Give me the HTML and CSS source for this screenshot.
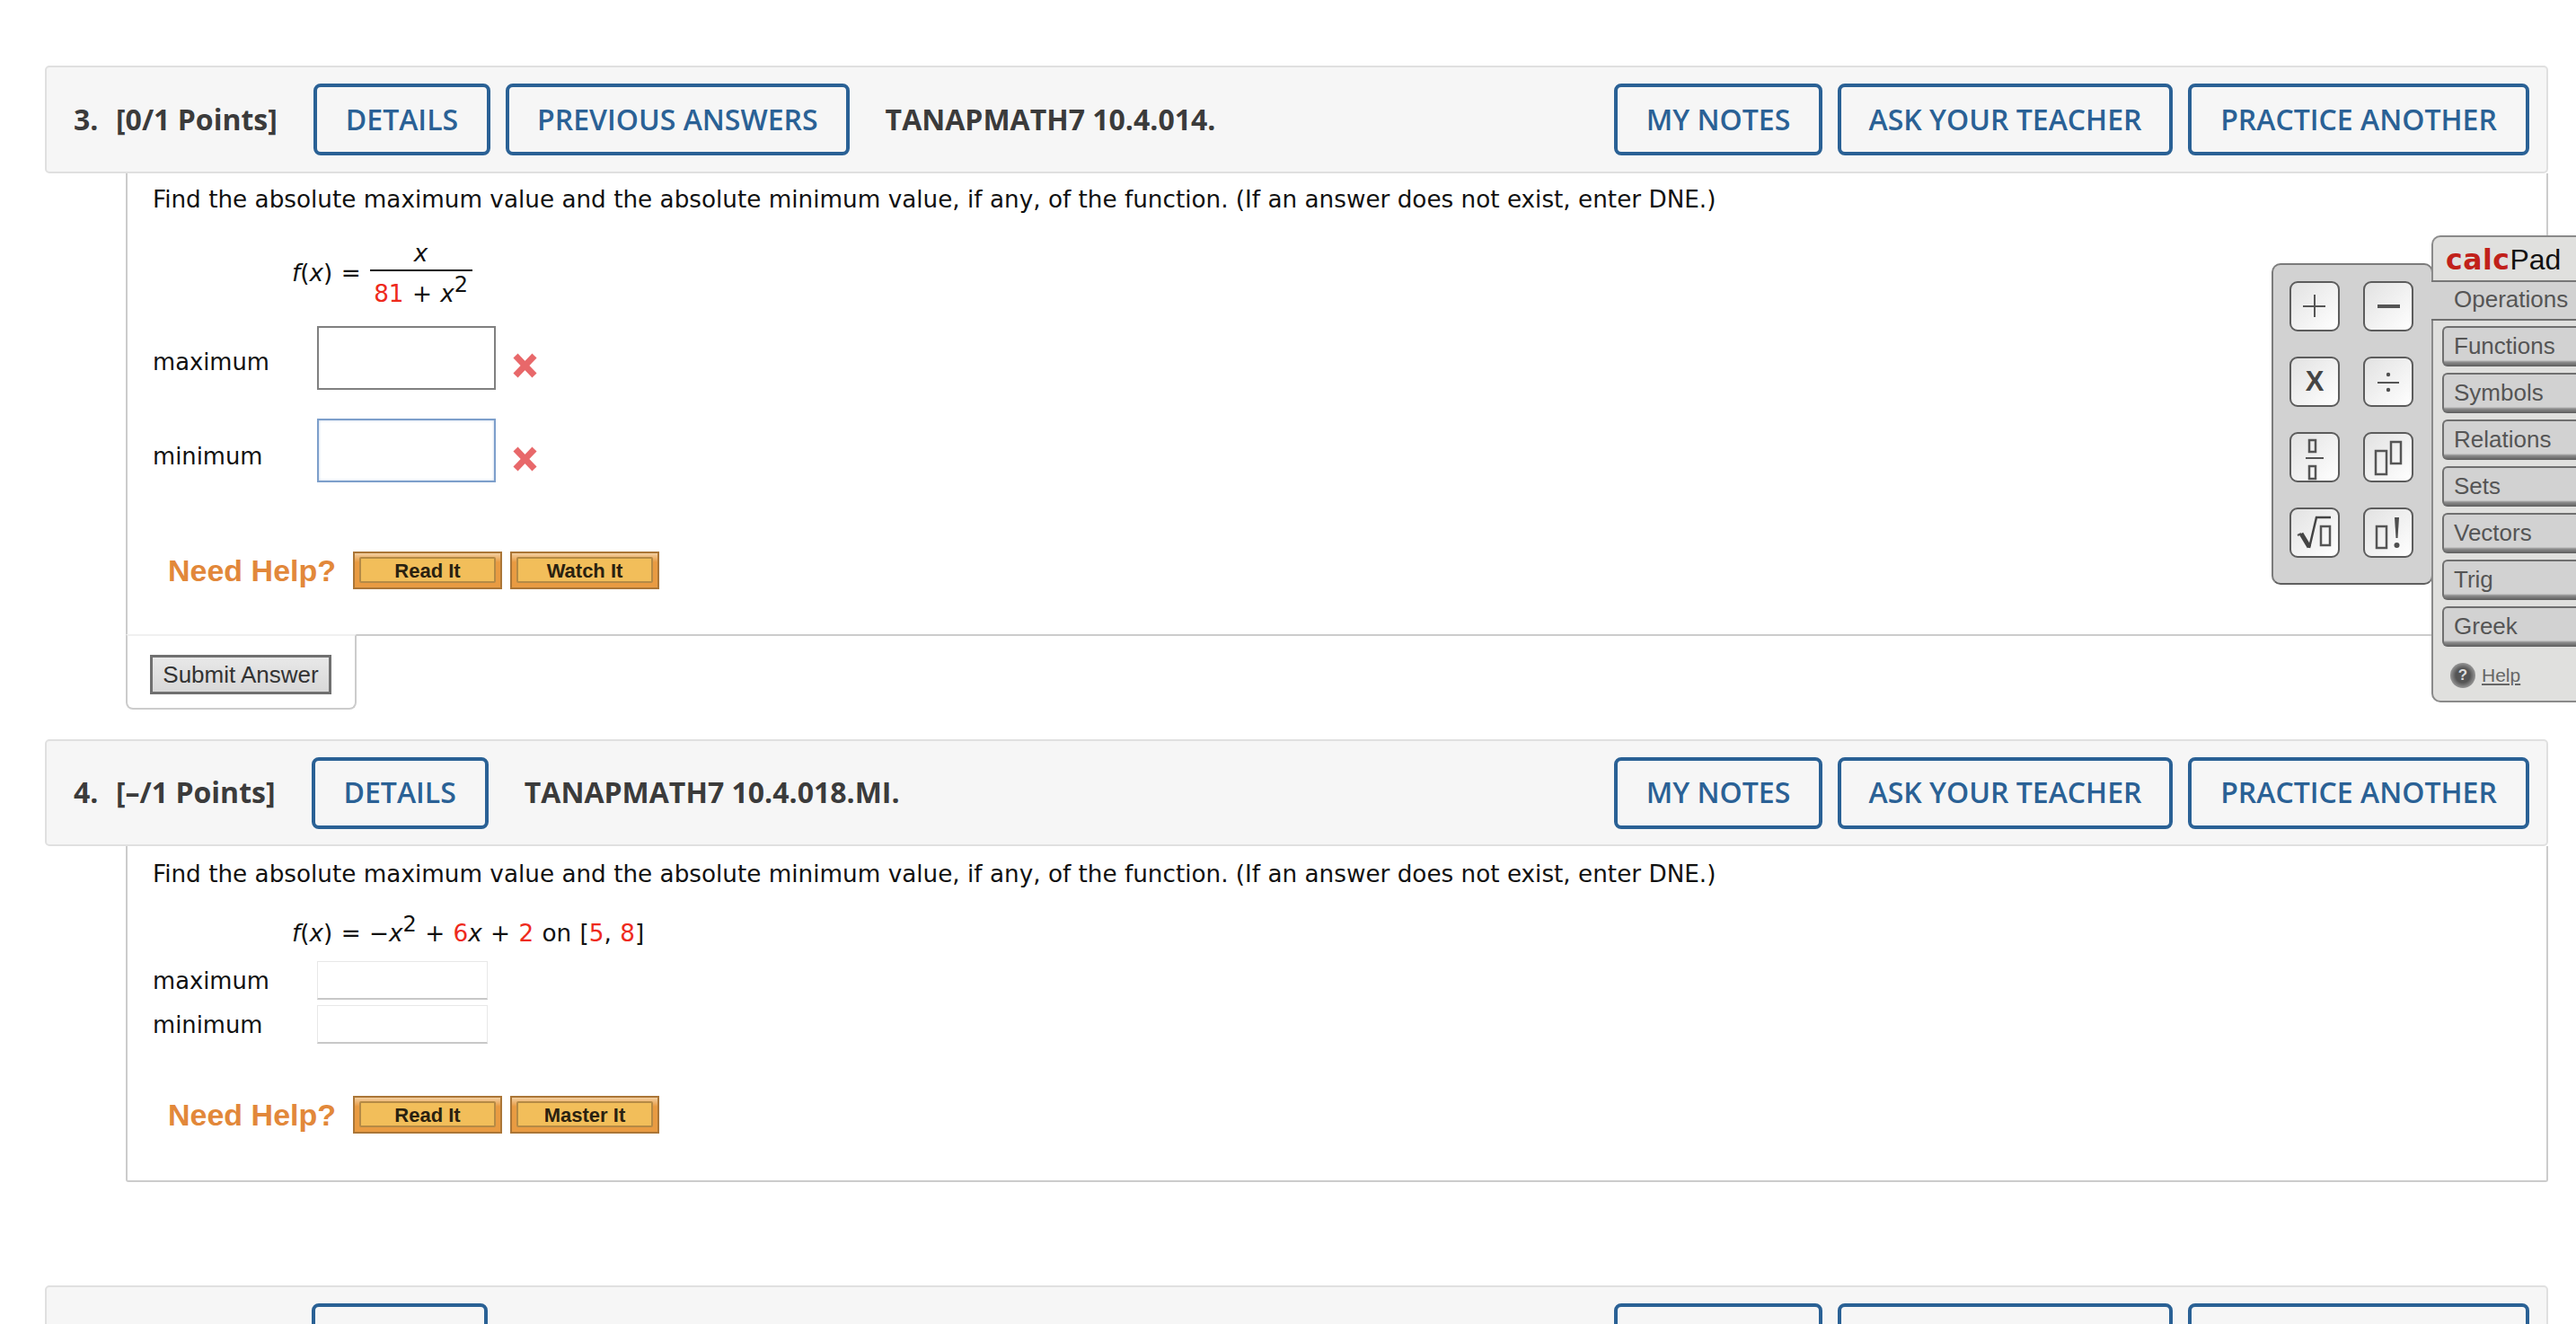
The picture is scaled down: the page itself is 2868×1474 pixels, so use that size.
FILE: index.html

```html
<!DOCTYPE html>
<html lang="en">
<head>
  <meta charset="UTF-8" />
  <title>Assignment</title>
  <link rel="stylesheet" href="styles.css">
</head>
<body>
  <div class="page">

    <div class="q-head">
      <span class="q-num">3.</span>
      <span class="q-points">[0/1 Points]</span>
      <a class="head-btn">DETAILS</a>
      <a class="head-btn w-prev">PREVIOUS ANSWERS</a>
      <span class="q-code">TANAPMATH7 10.4.014.</span>
      <div class="head-right">
        <a class="head-btn w-notes">MY NOTES</a>
        <a class="head-btn w-ask">ASK YOUR TEACHER</a>
        <a class="head-btn w-practice">PRACTICE ANOTHER</a>
      </div>
    </div>
    <div class="q-body q3">
      <div class="q-main">
        <p class="prompt">Find the absolute maximum value and the absolute minimum value, if any, of the function. (If an answer does not exist, enter DNE.)</p>
        <div class="formula frac-formula">
          <span class="lhs"><i>f</i>(<i>x</i>) =</span>
          <span class="frac">
            <span class="num"><i>x</i></span>
            <span class="den"><b class="red">81</b> + <i>x</i><sup>2</sup></span>
          </span>
        </div>
        <div class="answer-row tall">
          <label>maximum</label>
          <input class="answer" type="text" />
          <svg class="wrong" viewBox="0 0 27 28"><path d="M3 3 L24 25 M24 3 L3 25" /></svg>
        </div>
        <div class="answer-row tall second">
          <label>minimum</label>
          <input class="answer focused" type="text" />
          <svg class="wrong" viewBox="0 0 27 28"><path d="M3 3 L24 25 M24 3 L3 25" /></svg>
        </div>
        <div class="need-help">
          <span class="help-label">Need Help?</span>
          <a class="help-btn"><span>Read It</span></a>
          <a class="help-btn"><span>Watch It</span></a>
        </div>
      </div>
      <div class="submit-tab">
        <button class="submit-btn">Submit Answer</button>
      </div>
    </div>

    <div class="q-head tight">
      <span class="q-num">4.</span>
      <span class="q-points">[&ndash;/1 Points]</span>
      <a class="head-btn">DETAILS</a>
      <span class="q-code">TANAPMATH7 10.4.018.MI.</span>
      <div class="head-right">
        <a class="head-btn w-notes">MY NOTES</a>
        <a class="head-btn w-ask">ASK YOUR TEACHER</a>
        <a class="head-btn w-practice">PRACTICE ANOTHER</a>
      </div>
    </div>
    <div class="q-body q4">
      <p class="prompt">Find the absolute maximum value and the absolute minimum value, if any, of the function. (If an answer does not exist, enter DNE.)</p>
      <div class="formula line-formula">
        <i>f</i>(<i>x</i>) = &minus;<i>x</i><sup>2</sup> + <b class="red">6</b><i>x</i> + <b class="red">2</b> on [<b class="red">5</b>, <b class="red">8</b>]
      </div>
      <div class="answer-row">
        <label>maximum</label>
        <input class="answer flat" type="text" />
      </div>
      <div class="answer-row second">
        <label>minimum</label>
        <input class="answer flat" type="text" />
      </div>
      <div class="need-help">
        <span class="help-label">Need Help?</span>
        <a class="help-btn"><span>Read It</span></a>
        <a class="help-btn"><span>Master It</span></a>
      </div>
    </div>

    <!-- next question, only the tops of its buttons are on screen -->
    <div class="q-head tight">
      <a class="head-btn w-details first"></a>
      <div class="head-right">
        <a class="head-btn w-notes"></a>
        <a class="head-btn w-ask"></a>
        <a class="head-btn w-practice"></a>
      </div>
    </div>
  </div>

  <!-- calcPad floats over the question -->
  <div class="calcpad">
    <div class="pad-keys">
      <div class="key">
        <svg viewBox="0 0 52 52"><path d="M26 13 V38 M13 26 H38" class="thin" /></svg>
      </div>
      <div class="key">
        <svg viewBox="0 0 52 52"><path d="M14 26 H39" class="thick" /></svg>
      </div>
      <div class="key key-x">X</div>
      <div class="key">
        <svg viewBox="0 0 52 52"><path d="M14 27 H38" class="thin" /><circle cx="26" cy="18" r="2.200" /><circle cx="26" cy="35" r="2.200" /></svg>
      </div>
      <div class="key">
        <svg viewBox="0 0 52 52"><rect x="20" y="7" width="7" height="13" class="box" /><path d="M16 27 H36" class="thin" /><rect x="20" y="36" width="7" height="14" class="box" /></svg>
      </div>
      <div class="key">
        <svg viewBox="0 0 52 52"><rect x="12" y="19" width="12" height="26" class="box" /><rect x="29" y="9" width="11" height="24" class="box" /></svg>
      </div>
      <div class="key">
        <svg viewBox="0 0 52 52"><path d="M7 29 L11 27" class="thin" /><path d="M11 27 L20 42" class="sqrt-heavy" /><path d="M20 43 L28 9 H44" class="sqrt" /><rect x="33" y="19" width="10" height="21" class="box" /></svg>
      </div>
      <div class="key">
        <svg viewBox="0 0 52 52"><rect x="13" y="19" width="11" height="24" class="box" /><path d="M33 9 L34.500 32 H36.500 L38 9 Z" /><circle cx="35.500" cy="40" r="3" /></svg>
      </div>
    </div>
    <div class="pad-menu">
      <div class="pad-title"><b>calc</b>Pad</div>
      <div class="pad-current">Operations</div>
      <div class="pad-tabs">
        <div class="pad-tab">Functions</div>
        <div class="pad-tab">Symbols</div>
        <div class="pad-tab">Relations</div>
        <div class="pad-tab">Sets</div>
        <div class="pad-tab">Vectors</div>
        <div class="pad-tab">Trig</div>
        <div class="pad-tab">Greek</div>
      </div>
      <div class="pad-help">
        <span class="help-icon">?</span>
        <a>Help</a>
      </div>
    </div>
  </div>
</body>
</html>
```

FILE: styles.css

```css
html, body {
  margin: 0;
  padding: 0;
  height: 100%;
  overflow: hidden;
  background: #fff;
}
body {
  font-family: 'DejaVu Sans', Verdana, sans-serif;
  font-size: 26.250px;
  color: #111;
  position: relative;
}
.page {
  width: 2787px;
  height: 1474px;
  overflow: hidden;
  margin-left: 50px;
  padding-top: 73px;
  box-sizing: border-box;
}

/* question header */
.q-head {
  display: flex;
  align-items: center;
  box-sizing: border-box;
  height: 120px;
  padding: 0 19px 0 30px;
  background: #f6f6f6;
  border: 2px solid #e0e0e0;
  border-radius: 5px;
  font-family: 'Open Sans', sans-serif;
  font-weight: 600;
  font-size: 32px;
}
.q-head.tight {
  height: 119px;
}
.q-num {
  color: #3b3b3b;
  font-weight: 700;
  width: 47px;
  padding-bottom: 2px;
}
.q-points {
  color: #3b3b3b;
  font-weight: 700;
  margin-right: 40px;
  padding-bottom: 2px;
}
.q-code {
  color: #3b3b3b;
  font-weight: 700;
  margin-left: 23px;
  padding-bottom: 2px;
}
.head-btn {
  box-sizing: border-box;
  display: flex;
  align-items: center;
  justify-content: center;
  height: 80px;
  padding: 0 32px 2px;
  margin-right: 17px;
  border: 4px solid #2a6195;
  border-radius: 8px;
  color: #2a6195;
  white-space: nowrap;
}
.head-right {
  display: flex;
  margin-left: auto;
}
.head-right .head-btn:last-child {
  margin-right: 0;
}
.head-btn.w-details {
  width: 196px;
}
.head-btn.first {
  margin-left: 265px;
}
.head-btn.w-prev {
  padding-left: 31px;
  padding-right: 31px;
}
.head-btn.w-notes {
  width: 232px;
  padding-left: 0;
  padding-right: 0;
}
.head-btn.w-ask {
  width: 373px;
  padding-left: 0;
  padding-right: 0;
}
.head-btn.w-practice {
  width: 380px;
  padding-left: 0;
  padding-right: 0;
}

/* question body */
.q-body {
  margin-left: 90px;
  border-left: 2px solid #ccc;
  border-right: 2px solid #ccc;
  padding-left: 28px;
}
.q3 {
  border-right: 0;
  padding-left: 0;
  border-left: 0;
  margin-bottom: 33px;
}
.q-main {
  box-sizing: border-box;
  height: 515px;
  border-left: 2px solid #ccc;
  border-right: 2px solid #ccc;
  border-bottom: 2px solid #ccc;
  padding-left: 28px;
}
.q4 {
  box-sizing: border-box;
  height: 374px;
  border-bottom: 2px solid #ccc;
  border-radius: 0 0 3px 3px;
  margin-bottom: 115px;
}
.prompt {
  margin: 0;
  line-height: 34px;
  padding-top: 12px;
  white-space: nowrap;
}
.q4 .prompt {
  padding-top: 14px;
}
.red {
  color: #ee2a1c;
  font-weight: normal;
}
sup {
  font-size: 24px;
  line-height: 0;
  vertical-align: 11px;
}

/* formulas */
.formula {
  margin-left: 155px;
  word-spacing: 1px;
}
.frac-formula {
  display: flex;
  align-items: center;
  margin-top: 25px;
  height: 82px;
}
.lhs {
  margin-right: 10px;
  padding-bottom: 2px;
}
.frac {
  display: flex;
  flex-direction: column;
  align-items: center;
  width: 114px;
}
.num {
  width: 100%;
  text-align: center;
  line-height: 36px;
  border-bottom: 2px solid #111;
}
.den {
  line-height: 38px;
  padding-top: 6px;
  white-space: nowrap;
}
.line-formula {
  margin-top: 32px;
  line-height: 34px;
  white-space: nowrap;
}

/* answers */
.answer-row {
  display: flex;
  align-items: center;
  margin-top: 14px;
}
.answer-row.tall {
  margin-top: 17px;
  align-items: flex-start;
}
.answer-row.second {
  margin-top: 6px;
}
.answer-row.tall.second {
  margin-top: 32px;
}
.answer-row label {
  width: 183px;
  font-size: 25.800px;
  line-height: 34px;
}
.tall label {
  padding-top: 23px;
}
.tall.second label {
  padding-top: 25px;
}
.answer {
  box-sizing: border-box;
  width: 199px;
  height: 71px;
  margin: 0;
  background: #fff;
  border: 2px solid #808080;
  border-radius: 0;
  outline: none;
}
.answer.focused {
  border-color: #7d9fcb;
  box-shadow: inset 0 0 3px #b9cde6;
}
.answer.flat {
  width: 190px;
  height: 43px;
  border: 1px solid #e8e8e8;
  border-bottom: 2px solid #c8c8c8;
}
.wrong {
  width: 27px;
  height: 28px;
  margin: 30px 0 0 19px;
}
.second .wrong {
  margin-top: 31px;
}
.wrong path {
  fill: none;
  stroke: #e8686a;
  stroke-width: 7;
}

/* need help */
.need-help {
  display: flex;
  align-items: center;
  padding-left: 17px;
  margin-top: 58px;
}
.q3 .need-help {
  margin-top: 77px;
}
.help-label {
  font-family: 'Liberation Sans', Arial, sans-serif;
  font-weight: bold;
  font-size: 34px;
  color: #e2883a;
  width: 206px;
}
.help-btn {
  box-sizing: border-box;
  display: block;
  width: 166px;
  height: 42px;
  margin-right: 9px;
  padding: 4px 5px 5px;
  background: linear-gradient(#f3cfa0, #e99b42 26%);
  border: 2px solid #ab7637;
}
.help-btn span {
  box-sizing: border-box;
  display: block;
  height: 100%;
  background: #f2be5a;
  border: 2px solid #b58a45;
  border-radius: 2px;
  font-family: 'Liberation Sans', Arial, sans-serif;
  font-weight: bold;
  font-size: 22px;
  line-height: 27px;
  text-align: center;
  color: #2a2110;
}

/* submit tab */
.submit-tab {
  box-sizing: border-box;
  width: 257px;
  height: 84px;
  margin-top: -2px;
  padding: 21px 0 0 25px;
  background: #fff;
  border: 2px solid #ccc;
  border-top-color: #f0f0f0;
  border-radius: 0 0 8px 8px;
  position: relative;
}
.submit-btn {
  box-sizing: border-box;
  display: block;
  width: 202px;
  height: 44px;
  padding: 0;
  background: linear-gradient(#e8e8e8, #d8d8d8);
  border: 3px solid #707070;
  border-radius: 0;
  font-family: 'Liberation Sans', Arial, sans-serif;
  font-size: 26px;
  color: #333;
}

/* calcPad */
.calcpad {
  position: absolute;
  top: 262px;
  right: 0;
  display: flex;
  align-items: flex-start;
  font-family: 'Liberation Sans', Arial, sans-serif;
  color: #555;
}
.pad-keys {
  box-sizing: border-box;
  width: 180px;
  height: 358px;
  margin: 31px -2px 0 0;
  padding: 18px 19px 0 18px;
  display: grid;
  grid-template-columns: 56px 56px;
  grid-auto-rows: 56px;
  column-gap: 26px;
  row-gap: 28px;
  background: #d2d2d2;
  border: 2px solid #7b7b7b;
  border-bottom-color: #5f5f5f;
  border-radius: 10px;
}
.key {
  box-sizing: border-box;
  display: flex;
  align-items: center;
  justify-content: center;
  overflow: hidden;
  background: linear-gradient(135deg, #e2e2e2, #fff);
  border: 2px solid #5c5c5c;
  border-radius: 9px;
}
.key svg {
  width: 52px;
  height: 52px;
  fill: #4f4f4f;
}
.key-x {
  font-weight: bold;
  font-size: 31px;
  color: #454545;
}
.thin, .thick, .box, .sqrt, .sqrt-heavy {
  fill: none;
  stroke: #555;
}
.thin { stroke-width: 2; }
.thick { stroke-width: 4; }
.box { stroke-width: 2.500; }
.sqrt { stroke-width: 2.500; stroke: #444; }
.sqrt-heavy { stroke-width: 5; stroke: #444; }
.pad-menu {
  box-sizing: border-box;
  width: 161px;
  height: 520px;
  background: #e0e0de;
  border: 2px solid #8a8a8a;
  border-right: 0;
  border-radius: 10px 0 0 10px;
  position: relative;
}
.pad-title {
  height: 48px;
  padding-left: 14px;
  font-size: 32px;
  line-height: 50px;
  color: #111;
  white-space: nowrap;
}
.pad-title b {
  font-family: 'DejaVu Sans', sans-serif;
  font-size: 31.500px;
  letter-spacing: 0.500px;
  color: #c1211a;
}
.pad-current {
  box-sizing: border-box;
  height: 45px;
  margin-left: -2px;
  padding-left: 25px;
  background: #d2d2d2;
  border-top: 2px solid #777;
  border-bottom: 2px solid #6f6f6f;
  font-size: 26px;
  line-height: 38px;
  position: relative;
}
.pad-tabs {
  display: flex;
  flex-direction: column;
  gap: 7px;
  padding: 6px 0 0 10px;
}
.pad-tab {
  box-sizing: border-box;
  height: 45px;
  padding-left: 11px;
  background: linear-gradient(#d2d2d2 36px, #8e8e8e 38px, #5c5c5c);
  border: 2px solid #6f6f6f;
  border-right: 0;
  border-bottom: 0;
  border-radius: 6px 0 0 6px;
  font-size: 26px;
  line-height: 40px;
}
.pad-help {
  display: flex;
  align-items: center;
  gap: 7px;
  margin: 18px 0 0 19px;
  font-size: 21px;
}
.pad-help a {
  text-decoration: underline;
  color: #666;
}
.help-icon {
  display: block;
  box-sizing: border-box;
  width: 28px;
  height: 28px;
  border-radius: 50%;
  background: radial-gradient(circle, #555 40%, #8a8a8a 65%, #c4c4c4 100%);
  font-weight: bold;
  font-size: 17px;
  line-height: 28px;
  text-align: center;
  color: #ddd;
}
```
